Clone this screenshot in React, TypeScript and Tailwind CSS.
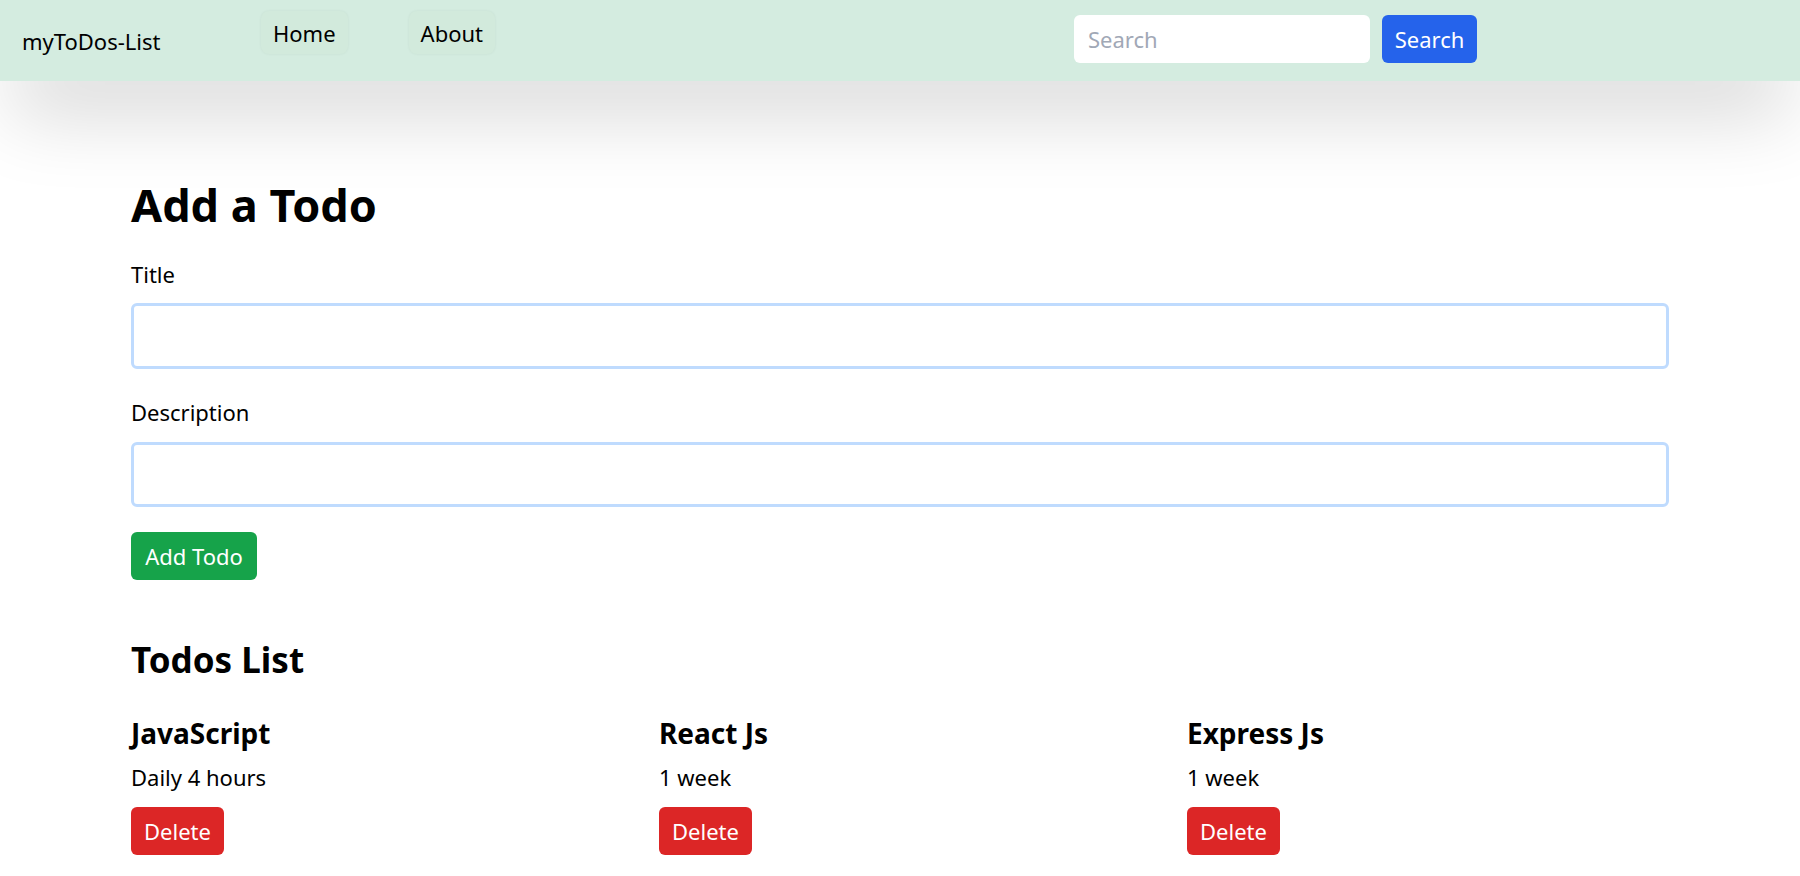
import { useState } from "react";

interface Todo {
  sno: number;
  title: string;
  desc: string;
}

const initialTodos: Todo[] = [
  { sno: 1, title: "JavaScript", desc: "Daily 4 hours" },
  { sno: 2, title: "React Js", desc: "1 week" },
  { sno: 3, title: "Express Js", desc: "1 week" },
];

function Header() {
  return (
    <nav className="relative z-10 flex h-[81px] items-start bg-[#d4ece0] pl-[22px] pr-[323px] shadow-[0_40px_80px_-10px_rgba(0,0,0,0.18)]">
      <a href="#" className="w-[239px] pt-[25px] text-[22px] leading-[33px] text-black">
        myToDos-List
      </a>
      <ul className="flex gap-[61px] pt-[11px]">
        <li>
          <a
            href="#"
            className="flex h-[43px] items-center rounded-lg bg-[#d2eadc] px-[12px] pt-[2px] text-[22px] text-black shadow-[0_0_3px_rgba(0,0,0,0.06)]"
          >
            Home
          </a>
        </li>
        <li>
          <a
            href="#"
            className="flex h-[43px] items-center rounded-lg bg-[#d2eadc] px-[12px] pt-[2px] text-[22px] text-black shadow-[0_0_3px_rgba(0,0,0,0.06)]"
          >
            About
          </a>
        </li>
      </ul>
      <form className="ml-auto flex gap-[12px] pt-[15px]" onSubmit={(e) => e.preventDefault()}>
        <input
          type="search"
          placeholder="Search"
          className="h-[48px] w-[296px] rounded-md bg-white px-[14px] text-[22px] text-black outline-none placeholder:text-[#a1a8b6]"
        />
        <button
          type="submit"
          className="h-[48px] w-[95px] rounded-md bg-[#2563eb] text-[22px] text-white"
        >
          Search
        </button>
      </form>
    </nav>
  );
}

function AddTodo({ onAdd }: { onAdd: (title: string, desc: string) => void }) {
  const [title, setTitle] = useState("");
  const [desc, setDesc] = useState("");

  const submit = (e: React.FormEvent) => {
    e.preventDefault();
    if (!title || !desc) return;
    onAdd(title, desc);
    setTitle("");
    setDesc("");
  };

  return (
    <div>
      <h3 className="text-[45px] font-bold leading-[54px] text-black">Add a Todo</h3>
      <form onSubmit={submit} className="mt-[26px]">
        <label htmlFor="title" className="block text-[22px] leading-[33px]">
          Title
        </label>
        <input
          id="title"
          value={title}
          onChange={(e) => setTitle(e.target.value)}
          className="mt-[12px] block h-[66px] w-full rounded-[6px] border-[3px] border-[#bfdbfe] px-3 text-[22px] outline-none"
        />
        <label htmlFor="desc" className="mt-[27px] block text-[22px] leading-[33px]">
          Description
        </label>
        <input
          id="desc"
          value={desc}
          onChange={(e) => setDesc(e.target.value)}
          className="mt-[13px] block h-[65px] w-full rounded-[6px] border-[3px] border-[#bfdbfe] px-3 text-[22px] outline-none"
        />
        <button
          type="submit"
          className="mt-[25px] h-[48px] w-[126px] rounded-[6px] bg-[#16a34a] text-[22px] text-white"
        >
          Add Todo
        </button>
      </form>
    </div>
  );
}

export default function App() {
  const [todos, setTodos] = useState<Todo[]>(initialTodos);

  const onAdd = (title: string, desc: string) => {
    const sno = todos.length ? todos[todos.length - 1].sno + 1 : 1;
    setTodos([...todos, { sno, title, desc }]);
  };

  const onDelete = (todo: Todo) => {
    setTodos(todos.filter((t) => t !== todo));
  };

  return (
    <div className="min-h-screen bg-white font-['Noto_Sans',sans-serif] text-black">
      <Header />
      <main className="mx-auto w-[1538px] pt-[97px] pb-8">
        <AddTodo onAdd={onAdd} />
        <h3 className="mt-[59px] text-[35px] font-bold leading-[42px]">Todos List</h3>
        <div className="mt-[35px] flex">
          {todos.length === 0 ? (
            <p className="text-[22px]">No Todos to display</p>
          ) : (
            todos.map((todo) => (
              <div key={todo.sno} className="w-[528px] shrink-0">
                <h4 className="text-[28px] font-bold leading-[34px]">{todo.title}</h4>
                <p className="mt-[11px] text-[22px] leading-[33px]">{todo.desc}</p>
                <button
                  onClick={() => onDelete(todo)}
                  className="mt-[13px] h-[48px] w-[93px] rounded-[6px] bg-[#dc2626] text-[22px] text-white"
                >
                  Delete
                </button>
              </div>
            ))
          )}
        </div>
      </main>
    </div>
  );
}
